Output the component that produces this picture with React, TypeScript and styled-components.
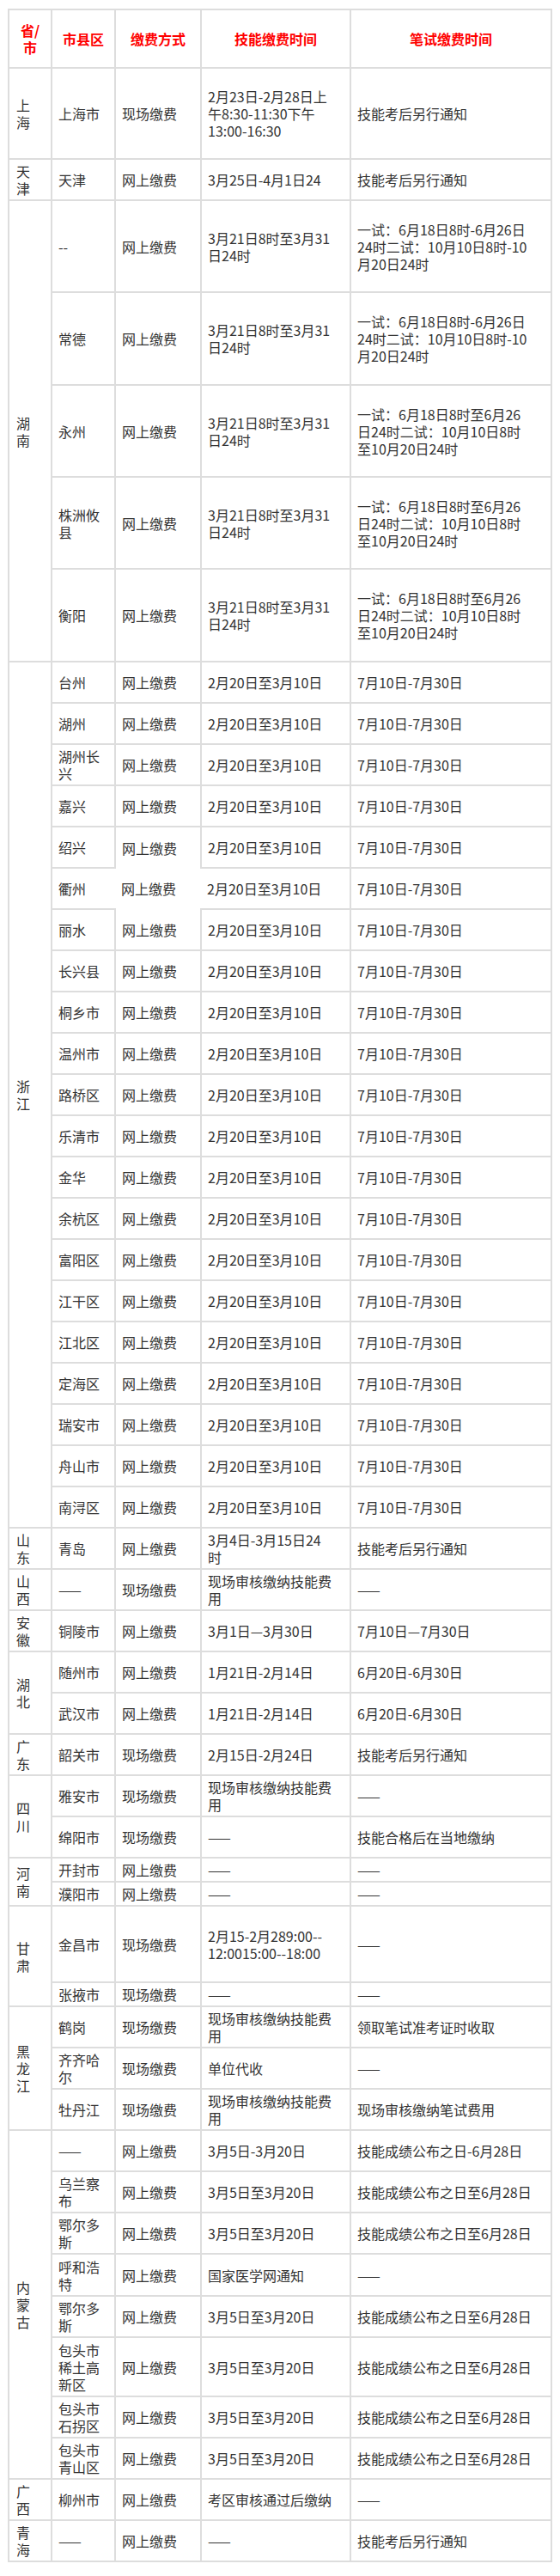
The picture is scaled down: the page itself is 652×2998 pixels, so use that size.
import React from "react";
import styled, { createGlobalStyle, css } from "styled-components";

const GlobalStyle = createGlobalStyle`
  html, body {
    margin: 0;
    padding: 0;
    background: #ffffff;
  }
  body {
    font-family: "Noto Sans CJK SC", "Noto Sans", sans-serif;
  }
`;

const Page = styled.div`
  padding: 10px 0 16px 9px;
`;

const Table = styled.table`
  width: 632px;
  table-layout: fixed;
  border-collapse: collapse;
  font-size: 16px;
  line-height: 20px;
  color: #333333;
`;

const Col = styled.col<{ $w: number }>`
  width: ${(p) => p.$w}px;
`;

const Row = styled.tr<{ $h: number }>`
  height: ${(p) => p.$h}px;
`;

const HeadCell = styled.th`
  border: 2px solid #dddddd;
  padding: 3px 7px;
  color: #ff0000;
  font-weight: bold;
  text-align: center;
  vertical-align: middle;
`;

const Cell = styled.td<{ $open?: boolean; $prov?: boolean }>`
  border: 2px solid #dddddd;
  padding: 3px 7px;
  text-align: left;
  vertical-align: middle;
  white-space: pre-line;
  word-break: normal;
  ${(p) =>
    p.$prov &&
    css`
      padding: 3px 12px 3px 8px;
    `}
  ${(p) =>
    p.$open &&
    css`
      border-style: hidden;
    `}
`;

type Entry = {
  c: string;
  m: string;
  s: string;
  w: string;
  h?: number;
  open?: boolean;
};

type Group = { p: string; rows: Entry[] };

const HUNAN_A = "一试：6月18日8时-6月26日\n24时二试：10月10日8时-10\n月20日24时";
const HUNAN_B = "一试：6月18日8时至6月26\n日24时二试：10月10日8时\n至10月20日24时";
const HUNAN_S = "3月21日8时至3月31\n日24时";
const SKILL_FEE = "现场审核缴纳技能费\n用";
const DASH = "——";

const zhejiang = [
  "台州",
  "湖州",
  "湖州长兴",
  "嘉兴",
  "绍兴",
  "衢州",
  "丽水",
  "长兴县",
  "桐乡市",
  "温州市",
  "路桥区",
  "乐清市",
  "金华",
  "余杭区",
  "富阳区",
  "江干区",
  "江北区",
  "定海区",
  "瑞安市",
  "舟山市",
  "南浔区",
];

const NMG_S = "3月5日至3月20日";
const NMG_W = "技能成绩公布之日至6月28日";

const groups: Group[] = [
  {
    p: "上海",
    rows: [
      {
        c: "上海市",
        m: "现场缴费",
        s: "2月23日-2月28日上\n午8:30-11:30下午\n13:00-16:30",
        w: "技能考后另行通知",
        h: 106,
      },
    ],
  },
  {
    p: "天津",
    rows: [{ c: "天津", m: "网上缴费", s: "3月25日-4月1日24", w: "技能考后另行通知" }],
  },
  {
    p: "湖南",
    rows: [
      { c: "--", m: "网上缴费", s: HUNAN_S, w: HUNAN_A, h: 107 },
      { c: "常德", m: "网上缴费", s: HUNAN_S, w: HUNAN_A, h: 108 },
      { c: "永州", m: "网上缴费", s: HUNAN_S, w: HUNAN_B, h: 107 },
      { c: "株洲攸县", m: "网上缴费", s: HUNAN_S, w: HUNAN_B, h: 107 },
      { c: "衡阳", m: "网上缴费", s: HUNAN_S, w: HUNAN_B, h: 108 },
    ],
  },
  {
    p: "浙江",
    rows: zhejiang.map((c) => ({
      c,
      m: "网上缴费",
      s: "2月20日至3月10日",
      w: "7月10日-7月30日",
      open: c === "衢州",
    })),
  },
  {
    p: "山东",
    rows: [{ c: "青岛", m: "网上缴费", s: "3月4日-3月15日24\n时", w: "技能考后另行通知" }],
  },
  {
    p: "山西",
    rows: [{ c: DASH, m: "现场缴费", s: SKILL_FEE, w: DASH }],
  },
  {
    p: "安徽",
    rows: [{ c: "铜陵市", m: "网上缴费", s: "3月1日—3月30日", w: "7月10日—7月30日" }],
  },
  {
    p: "湖北",
    rows: [
      { c: "随州市", m: "网上缴费", s: "1月21日-2月14日", w: "6月20日-6月30日" },
      { c: "武汉市", m: "网上缴费", s: "1月21日-2月14日", w: "6月20日-6月30日" },
    ],
  },
  {
    p: "广东",
    rows: [{ c: "韶关市", m: "现场缴费", s: "2月15日-2月24日", w: "技能考后另行通知" }],
  },
  {
    p: "四川",
    rows: [
      { c: "雅安市", m: "现场缴费", s: SKILL_FEE, w: DASH },
      { c: "绵阳市", m: "现场缴费", s: DASH, w: "技能合格后在当地缴纳" },
    ],
  },
  {
    p: "河南",
    rows: [
      { c: "开封市", m: "网上缴费", s: DASH, w: DASH, h: 28 },
      { c: "濮阳市", m: "网上缴费", s: DASH, w: DASH, h: 28 },
    ],
  },
  {
    p: "甘肃",
    rows: [
      {
        c: "金昌市",
        m: "现场缴费",
        s: "2月15-2月289:00--\n12:0015:00--18:00",
        w: DASH,
        h: 89,
      },
      { c: "张掖市", m: "现场缴费", s: DASH, w: DASH, h: 28 },
    ],
  },
  {
    p: "黑龙江",
    rows: [
      { c: "鹤岗", m: "现场缴费", s: SKILL_FEE, w: "领取笔试准考证时收取" },
      { c: "齐齐哈尔", m: "现场缴费", s: "单位代收", w: DASH },
      { c: "牡丹江", m: "现场缴费", s: SKILL_FEE, w: "现场审核缴纳笔试费用" },
    ],
  },
  {
    p: "内蒙古",
    rows: [
      { c: DASH, m: "网上缴费", s: "3月5日-3月20日", w: "技能成绩公布之日-6月28日" },
      { c: "乌兰察布", m: "网上缴费", s: NMG_S, w: NMG_W },
      { c: "鄂尔多斯", m: "网上缴费", s: NMG_S, w: NMG_W },
      { c: "呼和浩特", m: "网上缴费", s: "国家医学网通知", w: DASH, h: 49 },
      { c: "鄂尔多斯", m: "网上缴费", s: NMG_S, w: NMG_W },
      { c: "包头市稀土高新区", m: "网上缴费", s: NMG_S, w: NMG_W, h: 69 },
      { c: "包头市石拐区", m: "网上缴费", s: NMG_S, w: NMG_W },
      { c: "包头市青山区", m: "网上缴费", s: NMG_S, w: NMG_W },
    ],
  },
  {
    p: "广西",
    rows: [{ c: "柳州市", m: "网上缴费", s: "考区审核通过后缴纳", w: DASH }],
  },
  {
    p: "青海",
    rows: [{ c: DASH, m: "网上缴费", s: DASH, w: "技能考后另行通知" }],
  },
];

const headers = ["省/市", "市县区", "缴费方式", "技能缴费时间", "笔试缴费时间"];
const widths = [50, 74, 100, 174, 234];

export default function App() {
  return (
    <>
      <GlobalStyle />
      <Page>
        <Table>
          <colgroup>
            {widths.map((w, i) => (
              <Col key={i} $w={w} />
            ))}
          </colgroup>
          <thead>
            <Row $h={68}>
              {headers.map((h) => (
                <HeadCell key={h}>{h}</HeadCell>
              ))}
            </Row>
          </thead>
          <tbody>
            {groups.map((g) =>
              g.rows.map((r, i) => (
                <Row key={`${g.p}-${i}`} $h={r.h ?? 48}>
                  {i === 0 && (
                    <Cell $prov rowSpan={g.rows.length}>
                      {g.p}
                    </Cell>
                  )}
                  <Cell>{r.c}</Cell>
                  <Cell $open={r.open}>{r.m}</Cell>
                  <Cell>{r.s}</Cell>
                  <Cell>{r.w}</Cell>
                </Row>
              ))
            )}
          </tbody>
        </Table>
      </Page>
    </>
  );
}
